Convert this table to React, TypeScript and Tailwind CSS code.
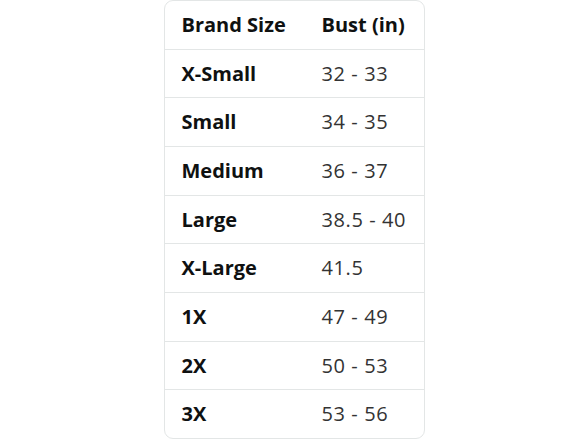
const ROWS: [string, string][] = [
  ["X-Small", "32 - 33"],
  ["Small", "34 - 35"],
  ["Medium", "36 - 37"],
  ["Large", "38.5 - 40"],
  ["X-Large", "41.5"],
  ["1X", "47 - 49"],
  ["2X", "50 - 53"],
  ["3X", "53 - 56"],
];

function Row({ left, right, head }: { left: string; right: string; head?: boolean }) {
  return (
    <div className="grid flex-1 grid-cols-[140px_1fr] border-t border-[#e3e6e6] first:border-t-0">
      <div className="flex items-center pl-[17px] font-bold text-[#0f1111]">{left}</div>
      <div
        className={
          "flex items-center pl-[17px] " +
          (head ? "font-bold text-[#0f1111]" : "tracking-[0.6px] text-[#333333]")
        }
      >
        {right}
      </div>
    </div>
  );
}

export default function App() {
  return (
    <div className="flex h-[441px] w-full justify-center bg-white font-['Open_Sans',sans-serif] text-[20px]">
      <div className="flex h-[439px] w-[261px] flex-col overflow-hidden rounded-[9px] border border-[#e3e6e6]">
        <Row left="Brand Size" right="Bust (in)" head />
        {ROWS.map(([l, r]) => (
          <Row key={l} left={l} right={r} />
        ))}
      </div>
    </div>
  );
}
